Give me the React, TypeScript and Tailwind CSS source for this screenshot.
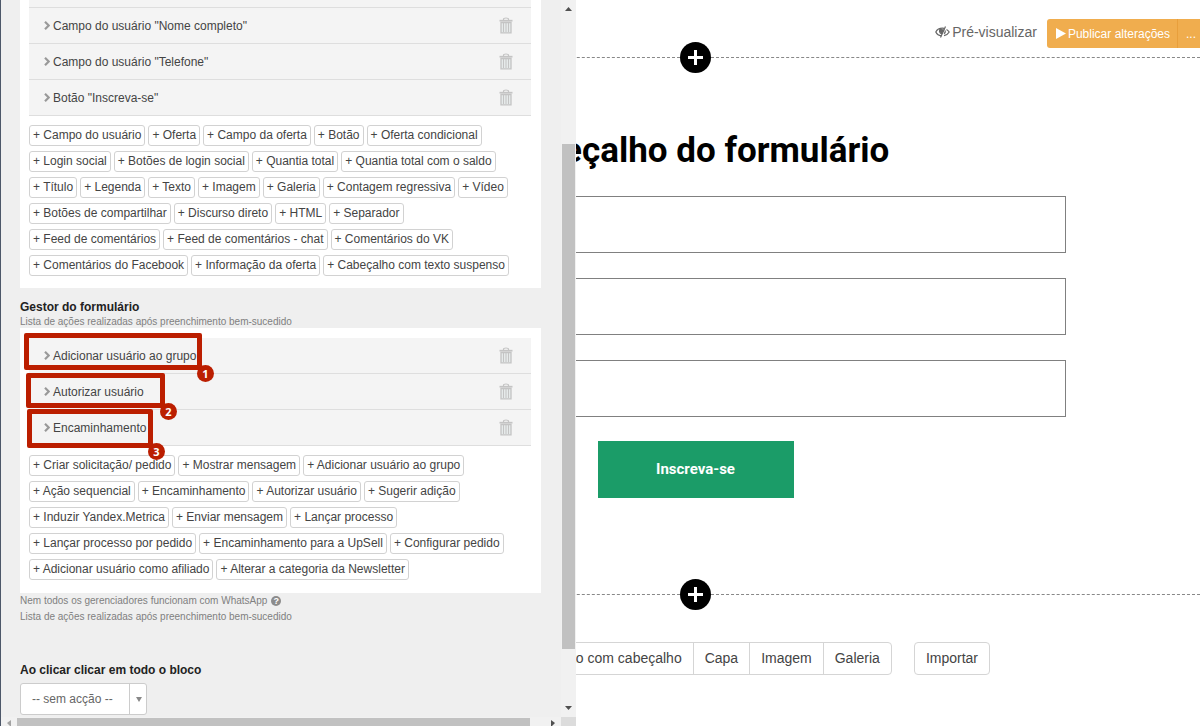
import type { ReactNode } from "react";

const topRows = ['Campo do usuário "Nome completo"', 'Campo do usuário "Telefone"', 'Botão "Inscreva-se"'];

const blockChips = [
  ["Campo do usuário", "Oferta", "Campo da oferta", "Botão", "Oferta condicional"],
  ["Login social", "Botões de login social", "Quantia total", "Quantia total com o saldo"],
  ["Título", "Legenda", "Texto", "Imagem", "Galeria", "Contagem regressiva", "Vídeo"],
  ["Botões de compartilhar", "Discurso direto", "HTML", "Separador"],
  ["Feed de comentários", "Feed de comentários - chat", "Comentários do VK"],
  ["Comentários do Facebook", "Informação da oferta", "Cabeçalho com texto suspenso"],
];

const actionChips = [
  ["Criar solicitação/ pedido", "Mostrar mensagem", "Adicionar usuário ao grupo"],
  ["Ação sequencial", "Encaminhamento", "Autorizar usuário", "Sugerir adição"],
  ["Induzir Yandex.Metrica", "Enviar mensagem", "Lançar processo"],
  ["Lançar processo por pedido", "Encaminhamento para a UpSell", "Configurar pedido"],
  ["Adicionar usuário como afiliado", "Alterar a categoria da Newsletter"],
];

function TrashIcon() {
  return (
    <svg width="14" height="17" viewBox="0 0 14 17" fill="none" stroke="#c4c4c4">
      <path d="M4.5 3V2.2Q4.5 1 7 1T9.500 2.200V3" strokeWidth="1.2" />
      <path d="M0.500 3.700H13.500" strokeWidth="1.700" />
      <path d="M2 5.500H12V15.800H2Z" fill="#e6eaea" strokeWidth="1.300" />
      <path d="M4.500 6V15M7 6V15M9.500 6V15" />
    </svg>
  );
}

function Row({ label, children }: { label: string; children?: ReactNode }) {
  return (
    <li className="relative flex h-9 items-center border-b border-[#dedede] bg-[#f4f4f4] pr-[18px] pl-[15px]">
      <svg className="mr-[3px]" width="6" height="9" viewBox="0 0 6 9" fill="none">
        <path d="M1 0.800L4.700 4.500L1 8.200" stroke="#999" strokeWidth="2.200" />
      </svg>
      <span className="flex-1">{label}</span>
      <button type="button" aria-label={`Excluir ${label}`}>
        <TrashIcon />
      </button>
      {children}
    </li>
  );
}

function Chips({ rows }: { rows: string[][] }) {
  return (
    <div className="flex flex-col gap-[5px] pt-[9px]">
      {rows.map((row) => (
        <div key={row[0]} className="flex gap-[3px]">
          {row.map((label) => (
            <button
              key={label}
              type="button"
              className="h-[21px] rounded-[3px] border border-[#d2d2d2] bg-white px-[3px] leading-[19px] whitespace-nowrap"
            >
              + {label}
            </button>
          ))}
        </div>
      ))}
    </div>
  );
}

function Badge({ n }: { n: number }) {
  return (
    <span className="absolute -right-[17px] -bottom-[17px] flex size-[17px] items-center justify-center rounded-full bg-[#bb1e00] font-['Open_Sans',sans-serif] text-[11px] leading-none font-bold text-white">
      {n}
    </span>
  );
}

function Divider() {
  return (
    <div className="flex h-[31px] items-center">
      <div className="flex-1 border-t border-dashed border-[#888]" />
      <button type="button" aria-label="Adicionar bloco" className="rounded-full bg-black">
        <svg width="31" height="31" viewBox="0 0 31 31" stroke="#fff" strokeWidth="3">
          <path d="M15.500 8V23M8 15.500H23" />
        </svg>
      </button>
      <div className="flex-1 border-t border-dashed border-[#888]" />
    </div>
  );
}

function Sidebar() {
  return (
    <aside className="relative z-10 flex w-[576px] shrink-0 border-l border-[#4d5769] bg-[#efefef] text-[12px] leading-4 text-[#444]">
      <div className="flex min-w-0 flex-1 flex-col">
        <div className="min-h-0 flex-1 overflow-hidden pr-5 pl-[19px]">
          <section className="bg-white pr-[10px] pb-3 pl-[9px]">
            <div className="h-2 border-b border-[#dedede] bg-[#f4f4f4]" />
            <ul>
              {topRows.map((label) => (
                <Row key={label} label={label} />
              ))}
            </ul>
            <Chips rows={blockChips} />
          </section>

          <h2 className="mt-[11px] font-bold text-[#222]">Gestor do formulário</h2>
          <p className="text-[10px] leading-[13px] text-[#808080]">
            Lista de ações realizadas após preenchimento bem-sucedido
          </p>
          <section className="bg-white pt-[10px] pr-[10px] pb-[13px] pl-[9px]">
            <ul>
              <Row label="Adicionar usuário ao grupo">
                <div className="pointer-events-none absolute -top-[5px] -left-[5px] z-10 h-[37px] w-[178px] rounded-[2px] border-[5px] border-[#bb1e00]">
                  <Badge n={1} />
                </div>
              </Row>
              <Row label="Autorizar usuário">
                <div className="pointer-events-none absolute -top-px -left-[3px] z-10 h-[35px] w-[139px] rounded-[2px] border-[5px] border-[#bb1e00]">
                  <Badge n={2} />
                </div>
              </Row>
              <Row label="Encaminhamento">
                <div className="pointer-events-none absolute -top-px -left-[2px] z-10 h-[39px] w-[126px] rounded-[2px] border-[5px] border-[#bb1e00]">
                  <Badge n={3} />
                </div>
              </Row>
            </ul>
            <Chips rows={actionChips} />
          </section>
          <div className="text-[10px] text-[#808080]">
            <p className="flex items-center gap-1">
              Nem todos os gerenciadores funcionam com WhatsApp
              <span className="flex size-[10px] items-center justify-center rounded-full bg-[#8c8c8c] text-[9px] leading-none font-bold text-white">
                ?
              </span>
            </p>
            <p>Lista de ações realizadas após preenchimento bem-sucedido</p>
          </div>

          <label htmlFor="click-action" className="mt-[37px] block font-bold text-[#222]">
            Ao clicar clicar em todo o bloco
          </label>
          <div className="relative mt-[5px] w-[127px]">
            <select
              id="click-action"
              className="h-8 w-full appearance-none rounded-[3px] border border-[#ccc] bg-white pl-[11px] text-[#666]"
            >
              <option>-- sem acção --</option>
            </select>
            <span className="pointer-events-none absolute inset-y-0 right-0 flex w-[18px] items-center justify-center border-l border-[#ccc]">
              <svg width="6" height="5" viewBox="0 0 6 5" fill="#888">
                <path d="M0 0H6L3 5Z" />
              </svg>
            </span>
          </div>
        </div>

        {/* horizontal scrollbar */}
        <div className="flex h-[9px] shrink-0 items-end bg-[#f1f1f1]">
          <div className="flex w-4 justify-center">
            <svg width="4" height="6" viewBox="0 0 4 6" fill="#a3a3a3">
              <path d="M4 0V6H3L0 3Z" />
            </svg>
          </div>
          <div className="h-2 flex-1 bg-[#c1c1c1]" />
          <div className="flex w-[31px] justify-end pr-[6px]">
            <svg width="4" height="6" viewBox="0 0 4 6" fill="#505050">
              <path d="M0 0V6H1L4 3Z" />
            </svg>
          </div>
        </div>
      </div>

      {/* vertical scrollbar */}
      <div className="flex w-[15px] shrink-0 flex-col items-center bg-[#f1f1f1]">
        <svg className="mt-[7px]" width="7" height="4" viewBox="0 0 7 4" fill="#505050">
          <path d="M0 4L3.500 0L7 4Z" />
        </svg>
        <div className="mt-[133px] w-[13px] flex-1 bg-[#c1c1c1]" />
        <svg className="mt-[57px] mb-[7px]" width="7" height="4" viewBox="0 0 7 4" fill="#505050">
          <path d="M0 0L3.500 4L7 0Z" />
        </svg>
        <div className="h-[9px] w-full bg-[#dcdcdc]" />
      </div>
    </aside>
  );
}

function Preview() {
  return (
    <main className="-ml-[385px] flex min-w-0 flex-1 flex-col">
      <header className="flex h-[42px] items-start justify-end">
        <a href="#preview" className="mt-6 mr-[10px] flex items-center gap-[2px] text-[14px] leading-4 text-[#666]">
          <svg width="15" height="12" viewBox="0 0 15 12" fill="none" stroke="#666" strokeWidth="1.200">
            <path d="M6.500 9.800C3.500 9.500 1.500 7.500 0.800 6C2 3.700 4.500 2.200 7.500 2.200C8 2.200 8.500 2.300 9 2.400" />
            <path d="M11.500 3.500C12.800 4.300 13.700 5.300 14.200 6C13.300 7.600 11.500 9.200 9 9.700" />
            <path d="M4.800 3.500C4.300 5 4.800 7 6.500 7.700L8.500 4Z" fill="#666" />
            <path d="M10.500 0.500L5.500 11.500M10.300 4.500C10.500 6 10 7 9 7.700" />
          </svg>
          Pré-visualizar
        </a>
        <div className="mt-[19px] flex h-[29px] rounded-l-[3px] bg-[#f0ad4e] text-[12px] text-white">
          <button type="button" className="flex items-center gap-[2px] pr-[7px] pl-[9px]">
            <svg width="10" height="11" viewBox="0 0 10 11" fill="#fff">
              <path d="M0 0L10 5.500L0 11Z" />
            </svg>
            Publicar alterações
          </button>
          <button type="button" aria-label="Mais opções" className="w-[23px] border-l border-[#e89f3c] pl-1">
            ...
          </button>
        </div>
      </header>

      <Divider />

      <form className="mx-auto flex w-full max-w-[741px] flex-col font-['Roboto',sans-serif]">
        <h1 className="mt-[57px] text-center text-[35px] leading-[42px] font-bold text-black">Cabeçalho do formulário</h1>
        <div className="mt-6 flex flex-col gap-[25px]">
          <input aria-label="Nome completo" className="h-[57px] border border-[#808080] bg-white px-4" />
          <input aria-label="E-mail" className="h-[57px] border border-[#808080] bg-white px-4" />
          <input aria-label="Telefone" className="h-[57px] border border-[#808080] bg-white px-4" />
        </div>
        <button
          type="button"
          className="mx-auto mt-6 h-[57px] w-[196px] bg-[#1b9c68] text-[15px] font-bold text-white"
        >
          Inscreva-se
        </button>
      </form>

      <div className="mt-[81px]">
        <Divider />
      </div>

      <div className="mt-8 mr-[210px] flex justify-end gap-[22px] text-[14px] text-[#444]">
        <div className="flex h-[33px] divide-x divide-[#d5d5d5] rounded-[4px] border border-[#d5d5d5]">
          <button type="button" className="px-[11px]">Texto com cabeçalho</button>
          <button type="button" className="px-[11px]">Capa</button>
          <button type="button" className="px-[11px]">Imagem</button>
          <button type="button" className="px-[11px]">Galeria</button>
        </div>
        <button type="button" className="h-[33px] rounded-[4px] border border-[#d5d5d5] px-[11px]">
          Importar
        </button>
      </div>
    </main>
  );
}

export default function App() {
  return (
    <div className="flex h-screen overflow-hidden bg-white font-['Liberation_Sans',Arial,sans-serif]">
      <Sidebar />
      <Preview />
    </div>
  );
}
